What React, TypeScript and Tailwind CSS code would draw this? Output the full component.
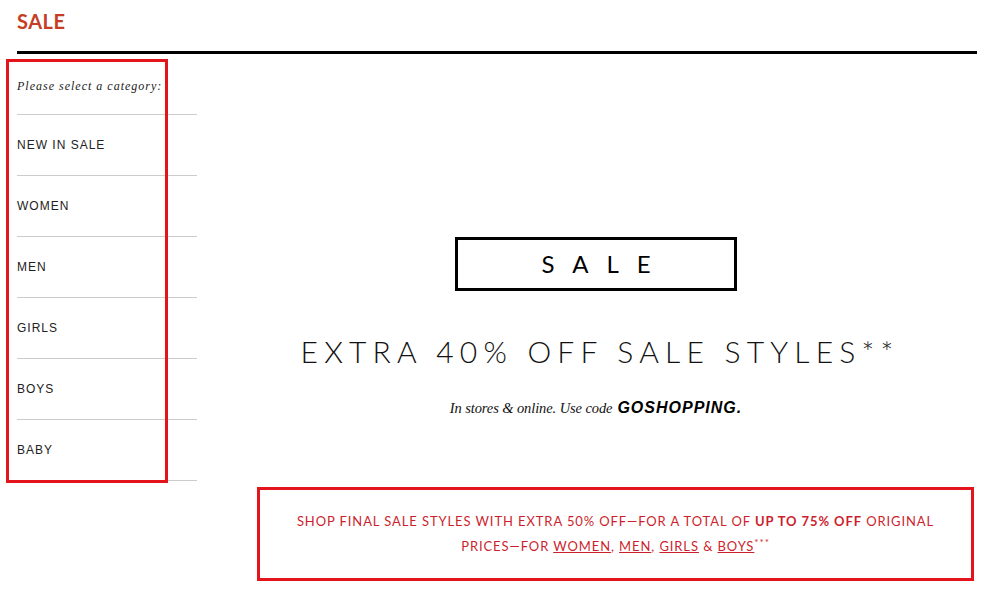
import React from "react";

const items = ["NEW IN SALE", "WOMEN", "MEN", "GIRLS", "BOYS", "BABY"];

export default function App() {
  return (
    <div className="relative w-[1004px] h-[603px] bg-white overflow-hidden">
      <div className="px-[17px] w-[994px]">
        <div className="h-[54px] pt-[9px] border-b-[3px] border-black">
          <h1
            className="text-[20px] font-bold leading-[24px] text-[#c63d25] tracking-[0.5px]"
            style={{ fontFamily: "Lato, 'Open Sans', sans-serif" }}
          >
            SALE
          </h1>
        </div>
        <div className="flex">
          <aside className="w-[180px] shrink-0">
            <div
              className="h-[61px] border-b border-[#cccccc] flex items-center pt-[3px] text-[12px] italic tracking-[1px] text-[#222]"
              style={{ fontFamily: "'Liberation Serif', 'DejaVu Serif', serif" }}
            >
              Please select a category:
            </div>
            {items.map((it) => (
              <div
                key={it}
                className="h-[61px] border-b border-[#cccccc] flex items-center text-[12px] tracking-[1px] text-[#222]"
                style={{ fontFamily: "'Liberation Sans', Arial, sans-serif" }}
              >
                {it}
              </div>
            ))}
          </aside>
          <main className="flex-1 pl-[18px] flex flex-col items-center">
            <div className="mt-[183px] w-[282px] h-[54px] border-[3px] border-black flex items-center justify-center">
              <span
                className="text-[24px] tracking-[18px] pl-[18px] text-black leading-none"
                style={{ fontFamily: "Lato, 'Open Sans', sans-serif" }}
              >
                SALE
              </span>
            </div>
            <div
              className="mt-[42px] text-[30px] font-light tracking-[6.2px] pl-[8px] text-[#111] leading-[36px] whitespace-nowrap"
              style={{ fontFamily: "Lato, 'Open Sans', sans-serif" }}
            >
              EXTRA 40% OFF SALE STYLES**
            </div>
            <div className="mt-[29px] flex items-baseline gap-[5px] leading-[20px]">
              <span
                className="italic text-[14.5px] text-[#111] tracking-[-0.1px]"
                style={{ fontFamily: "'Liberation Serif', 'DejaVu Serif', serif" }}
              >
                In stores &amp; online. Use code
              </span>
              <span
                className="italic font-bold text-[16px] text-black tracking-[1px]"
                style={{ fontFamily: "'Liberation Sans', Arial, sans-serif" }}
              >
                GOSHOPPING.
              </span>
            </div>
            <div className="self-stretch ml-[42px] mr-[3px] mt-[69px] h-[94px] border-[3px] border-[#e3141b] flex items-center justify-center">
              <p
                className="text-center text-[13px] leading-[25px] tracking-[0.9px] text-[#cc1f2e]"
                style={{ fontFamily: "Lato, 'Open Sans', sans-serif" }}
              >
                SHOP FINAL SALE STYLES WITH EXTRA 50% OFF—FOR A TOTAL OF{" "}
                <b className="font-bold">UP TO 75% OFF</b> ORIGINAL
                <br />
                PRICES—FOR <span className="underline">WOMEN</span>,{" "}
                <span className="underline">MEN</span>,{" "}
                <span className="underline">GIRLS</span> &amp;{" "}
                <span className="underline">BOYS</span>
                <sup className="text-[10px]">***</sup>
              </p>
            </div>
          </main>
        </div>
      </div>
      <div className="absolute left-[6px] top-[59px] w-[162px] h-[424px] border-[3px] border-[#e3141b] pointer-events-none" />
    </div>
  );
}
